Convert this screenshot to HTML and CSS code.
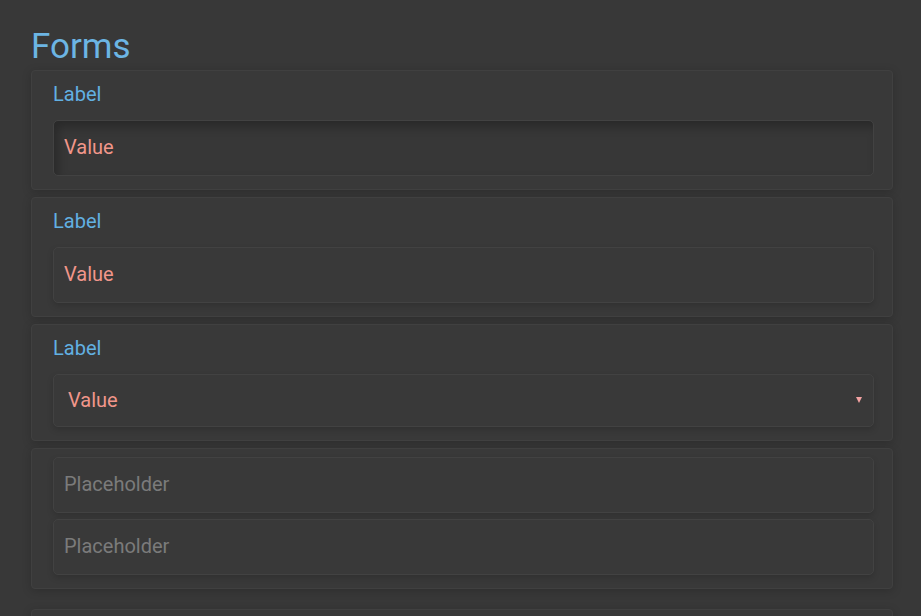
FILE: index.html
```html
<!doctype html>
<html lang="en">
	<head>
		<meta charset="UTF-8" />
		<meta name="viewport" content="width=device-width, initial-scale=1.0" />
		<title>Forms</title>
		<link rel="stylesheet" href="styles.css">
	</head>
	<body>
		<h1>Forms</h1>
		<div class="card">
			<label class="field-label" for="f1">Label</label>
			<input id="f1" class="field field-inset" type="text" value="Value" />
		</div>
		<div class="card">
			<label class="field-label" for="f2">Label</label>
			<input id="f2" class="field" type="text" value="Value" />
		</div>
		<div class="card">
			<label class="field-label" for="f3">Label</label>
			<div class="select-wrap">
				<select id="f3" class="field field-select">
					<option>Value</option>
				</select>
				<span class="caret"></span>
			</div>
		</div>
		<div class="card card-plain">
			<input class="field" type="text" placeholder="Placeholder" />
			<input class="field" type="text" placeholder="Placeholder" />
		</div>
		<div class="card card-next"></div>
	</body>
</html>
```

FILE: styles.css
```css
body {
	margin: 0;
	padding: 27px 28px 0 31px;
	font-family: Roboto, "Liberation Sans", sans-serif;
	background-color: #383838;
	color: #ccc;
	overflow: hidden;
	height: 616px;
	box-sizing: border-box;
}
h1 {
	font-size: 35px;
	font-weight: 400;
	line-height: 40px;
	margin: 0 0 3px;
	color: #6cb5e4;
}
.card {
	display: flex;
	flex-direction: column;
	gap: 13px;
	background-color: #393939;
	border: 1px solid #404040;
	border-radius: 4px;
	padding: 10px 18px 13px 21px;
	margin-bottom: 7px;
	box-shadow: 0 2px 10px rgba(0, 0, 0, 0.18);
}
.field-label {
	font-size: 20px;
	line-height: 26px;
	color: #62b0e2;
}
.field {
	box-sizing: border-box;
	width: 100%;
	height: 56px;
	margin: 0;
	padding: 0 10px 2px;
	font-family: Roboto, "Liberation Sans", sans-serif;
	font-size: 20px;
	color: #f1968a;
	background-color: #393939;
	border: 1px solid #424242;
	border-radius: 5px;
	outline: none;
	box-shadow: 0 3px 6px rgba(0, 0, 0, 0.15);
}
.field::placeholder {
	color: #7b7b7b;
}
.field-inset {
	background-color: #373737;
	box-shadow: inset 4px 6px 10px rgba(0, 0, 0, 0.25);
}
.select-wrap {
	position: relative;
}
.field-select {
	height: 53px;
	padding: 0 14px 2px;
	appearance: none;
	-webkit-appearance: none;
}
.caret {
	position: absolute;
	right: 12px;
	top: 23px;
	width: 0;
	height: 0;
	border-left: 3px solid transparent;
	border-right: 3px solid transparent;
	border-top: 6px solid #f3a2a2;
}
.card-plain {
	gap: 6px;
	padding-top: 8px;
}
.card-next {
	margin-top: 20px;
	min-height: 60px;
}
```
